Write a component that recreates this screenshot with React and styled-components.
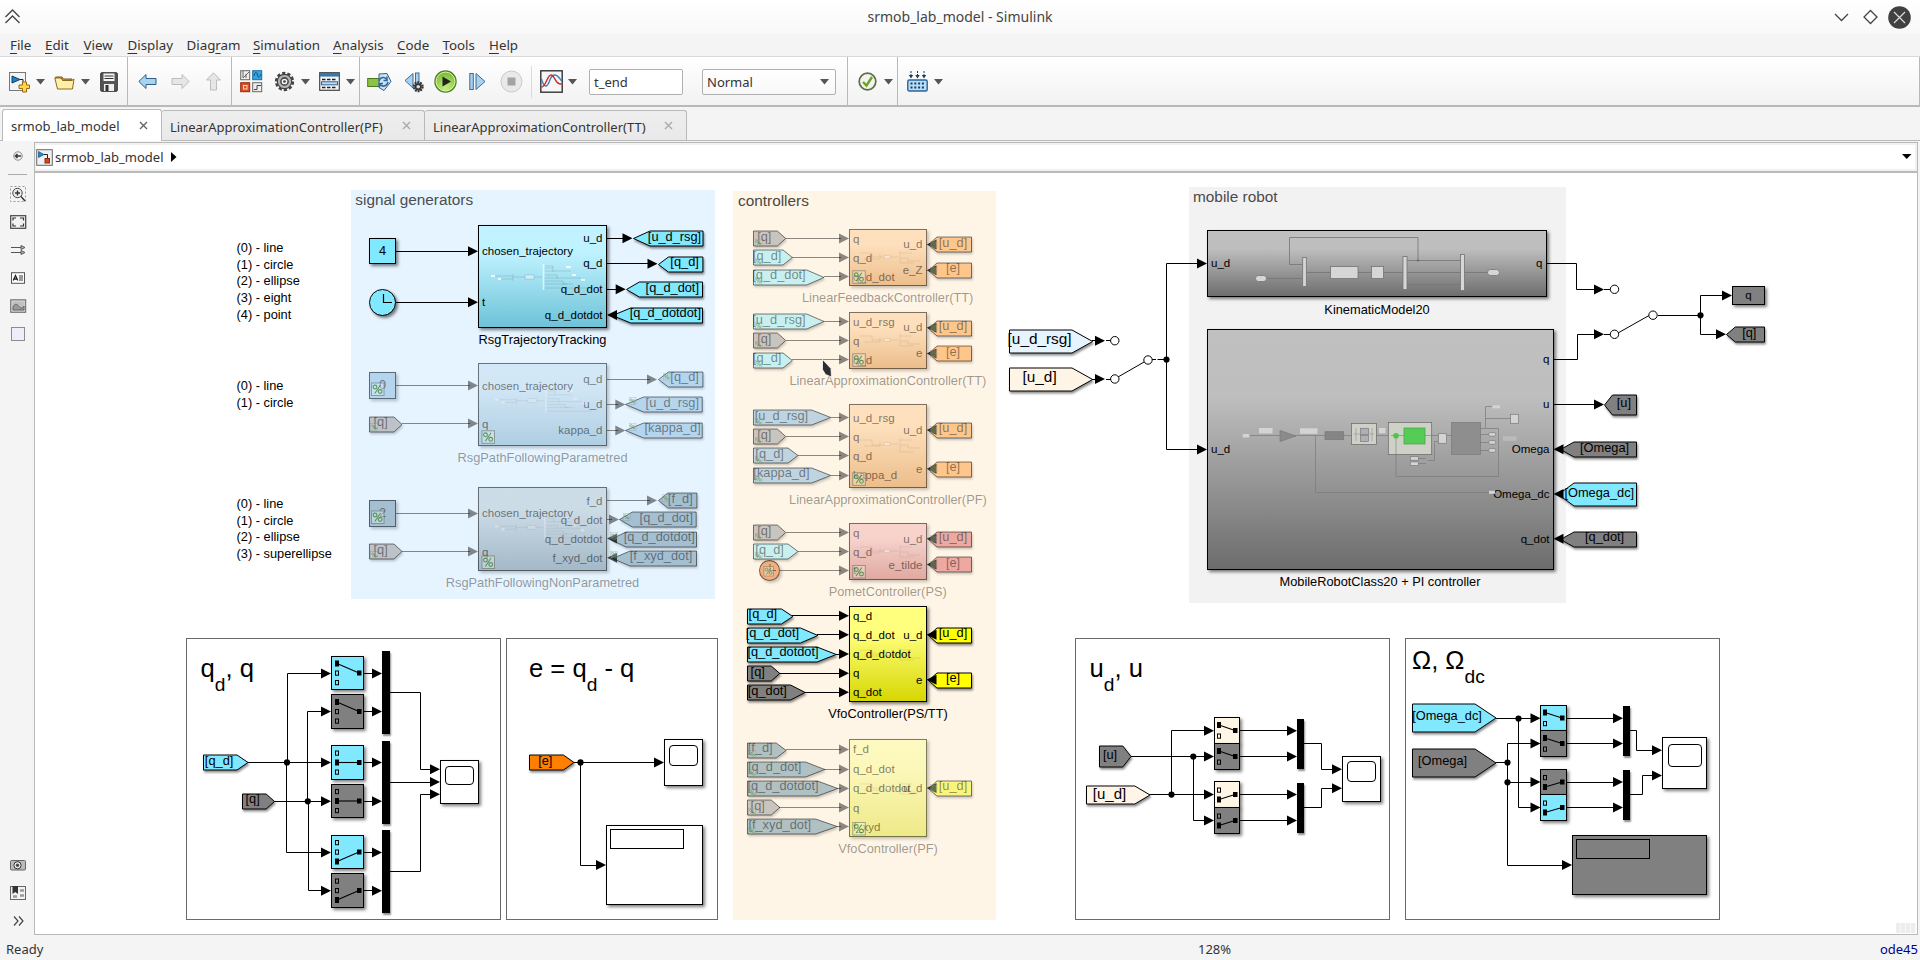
import React from "react";
import styled, { createGlobalStyle, css } from "styled-components";

const CYAN = "#80e8ff";
const GRAY = "#808080";
const CREAM = "#fff5e6";
const SKY = "#e6f4ff";
const INK = "#000";
const FADED = "rgba(0,0,0,0.45)";

const GlobalStyle = createGlobalStyle`
  html, body { margin: 0; padding: 0; overflow: hidden; background: #f4f4f4; }
  #root { height: 960px; }
  * { box-sizing: border-box; }
`;

/* ---------- window chrome ---------- */

const Window = styled.div`
  width: 1920px;
  height: 960px;
  display: flex;
  flex-direction: column;
  background: #f4f4f4;
  color: #333;
  font-family: "Noto Sans", "Open Sans", sans-serif;
  font-size: 13px;
  line-height: 18px;
  overflow: hidden;
`;

const TitleBar = styled.header`
  height: 34px;
  flex: none;
  display: grid;
  grid-template-columns: 120px 1fr 120px;
  align-items: center;
  background: linear-gradient(#ffffff, #f8f8f8);
  padding: 0 9px 0 4px;
`;

const Title = styled.div`
  text-align: center;
  font-size: 14px;
  color: #444;
  padding: 0 0 1px 5px;
`;

const WindowButtons = styled.div`
  display: flex;
  justify-content: flex-end;
  align-items: center;
  gap: 6px;
`;

const MenuBar = styled.nav`
  height: 23px;
  flex: none;
  display: flex;
  align-items: center;
  padding-left: 10px;
  border-bottom: 1px solid #d9d9d9;
  font-size: 13.33px;
`;

const MenuItem = styled.span`
  width: ${(p) => p.$w}px;
  white-space: nowrap;
  u { text-decoration-thickness: 1px; text-underline-offset: 3px; }
`;

const ToolBar = styled.div`
  height: 50px;
  flex: none;
  display: flex;
  background: linear-gradient(#ffffff, #f2f2f2);
  border-bottom: 2px solid #b9b9b9;
  border-right: 1px solid #b9b9b9;
`;

const ToolGroup = styled.div`
  width: ${(p) => p.$w}px;
  display: flex;
  align-items: center;
  padding-top: 1px;
  border-right: ${(p) => (p.$last ? "none" : "1px solid #b9b9b9")};
`;

const Tool = styled.div`
  flex: none;
  display: flex;
  align-items: center;
  justify-content: center;
  width: ${(p) => p.$w}px;
  margin-left: ${(p) => p.$gap}px;
  svg { flex: none; display: block; }
`;

const ToolDivider = styled.div`
  width: 1px;
  height: 32px;
  margin-left: 9px;
  background: #dadada;
`;

const Field = styled.div`
  flex: none;
  display: flex;
  align-items: center;
  justify-content: space-between;
  width: ${(p) => p.$w}px;
  height: 26px;
  margin-left: ${(p) => p.$gap}px;
  padding: 1px 6px 0 4px;
  background: ${(p) => (p.$flat ? "#fff" : "linear-gradient(#fff, #f8f8f8)")};
  border: 1px solid #b0b0b0;
  border-radius: 2px;
`;

const TabBar = styled.div`
  height: 34px;
  flex: none;
  display: flex;
  align-items: flex-end;
  padding-left: 2px;
  border-bottom: 1px solid #b9b9b9;
`;

const Tab = styled.div`
  display: flex;
  align-items: center;
  justify-content: space-between;
  width: ${(p) => p.$w}px;
  height: ${(p) => (p.$active ? 32 : 30)}px;
  margin-bottom: ${(p) => (p.$active ? -1 : 0)}px;
  padding: ${(p) => (p.$active ? "1px 13px 0 8px" : "2px 13px 0 8px")};
  background: ${(p) => (p.$active ? "#fff" : "linear-gradient(#eeeeee, #e9e9e9)")};
  border: 1px solid #b9b9b9;
  border-bottom: none;
  border-left-width: ${(p) => (p.$active ? 1 : 0)}px;
  border-radius: 3px 3px 0 0;
  white-space: nowrap;
  svg { margin-top: -2px; }
`;

const Body = styled.div`
  flex: 1;
  display: flex;
  min-height: 0;
  padding: 1px 2px 0 0;
`;

const Palette = styled.aside`
  width: 34px;
  flex: none;
  display: flex;
  flex-direction: column;
  align-items: center;
`;

const PaletteButton = styled.div`
  height: 28px;
  width: 24px;
  margin-left: 2px;
  display: flex;
  align-items: center;
  justify-content: center;
`;

const PaletteRule = styled.div`
  width: 19px;
  height: 1px;
  margin: 4px 0 5px;
  background: #aaa;
`;

const Spacer = styled.div`
  flex: 1;
`;

const Editor = styled.main`
  flex: 1;
  display: flex;
  flex-direction: column;
  border: 1px solid #b9b9b9;
`;

const BreadcrumbRow = styled.div`
  height: 30px;
  flex: none;
  display: flex;
  border-bottom: 2px solid #b9b9b9;
`;

const Breadcrumb = styled.div`
  flex: 1;
  display: flex;
  align-items: center;
  padding: 0 3px 0 0;
  background: #fff;
  border: 2px solid #f1f1f1;
  border-left-width: 1px;
`;

const Crumb = styled.span`
  padding: 0 7px 0 2px;
  flex: 1;
  display: flex;
  align-items: center;
  gap: 7px;
`;

const Canvas = styled.section`
  flex: 1;
  position: relative;
  overflow: hidden;
  background: #fff;
`;

const Sheet = styled.div`
  position: absolute;
  left: -35px;
  top: -173px;
  width: 1920px;
  height: 960px;
  font-family: "Liberation Sans", Arial, sans-serif;
`;

const StatusBar = styled.footer`
  height: 25px;
  flex: none;
  display: grid;
  grid-template-columns: 1192px 1fr auto;
  align-items: center;
  padding: 3px 2px 0 6px;
`;

const Solver = styled.span`
  color: #00008b;
`;

/* ---------- diagram nodes ---------- */

const placed = css`
  position: absolute;
  left: ${(p) => p.$x}px;
  top: ${(p) => p.$y}px;
`;

const sized = css`
  ${placed}
  width: ${(p) => p.$w}px;
  height: ${(p) => p.$h}px;
`;

const shift = { left: "0", center: "-50%", right: "-100%" };

const Label = styled.div`
  ${placed}
  transform: translate(${(p) => shift[p.$align || "left"]}, -50%);
  font-size: ${(p) => p.$size || 12.8}px;
  line-height: 1;
  white-space: pre;
  color: ${(p) => p.$color || INK};
`;

const Area = styled.div`
  ${sized}
  background: ${(p) => p.$fill};
`;

const Panel = styled.div`
  ${sized}
  background: #fff;
  border: 1px solid #6a6a6a;
`;

const Box = styled.div`
  ${sized}
  background: ${(p) => p.$fill};
  border: 1px solid ${(p) => (p.$faded ? "rgba(0,0,0,0.5)" : INK)};
  background-clip: ${(p) => (p.$faded ? "border-box" : "padding-box")};
  background-origin: border-box;
  box-shadow: 2px 2px 3px rgba(0, 0, 0, ${(p) => (p.$faded ? 0.22 : 0.5)});
  display: flex;
  align-items: center;
  justify-content: center;
  font-size: ${(p) => p.$size || 12.8}px;
  line-height: 1;
  color: ${(p) => (p.$faded ? FADED : INK)};
`;

const Disc = styled(Box)`
  border-radius: 50%;
`;

const MuxBar = styled.div`
  ${sized}
  background: #000;
  box-shadow: 1px 2px 2px rgba(0, 0, 0, 0.45);
`;

const Notes = styled.div`
  ${placed}
  font-size: 12.8px;
  line-height: 16.65px;
  color: #000;
  white-space: nowrap;
`;

const Formula = styled.div`
  ${placed}
  font-size: 25.6px;
  line-height: 30px;
  white-space: pre;
  color: #000;
  sub {
    font-size: 19.2px;
    line-height: 0;
    vertical-align: baseline;
    position: relative;
    top: 14px;
  }
`;

const Layer = styled.svg`
  position: absolute;
  left: 0;
  top: 0;
  width: 1920px;
  height: 960px;
  pointer-events: none;
`;

const TagShape = styled.svg`
  ${placed}
  overflow: visible;
  filter: drop-shadow(1.5px 2px 1.2px rgba(0, 0, 0, ${(p) => (p.$faded ? 0.2 : 0.45)}));
`;

const Grip = styled.div`
  position: absolute;
  right: 1px;
  bottom: 1px;
  width: 20px;
  height: 10px;
  background: repeating-linear-gradient(90deg, #ededed 0 4px, #f8f8f8 4px 5px);
`;

function CommentMark({ x, y, size = 13 }) {
  const small = size < 10;
  return (
    <g transform={`translate(${x} ${y}) scale(${size / 13})`}>
      <rect x="0.5" y="0.5" width="12.5" height="12.5" fill={small ? "rgba(240,245,235,0.2)" : "rgba(240,245,235,0.35)"} stroke="rgba(90,90,90,0.5)" strokeWidth={small ? 0.6 : 1} />
      <g fill="none" stroke="rgba(50,130,50,0.75)" strokeWidth="1.1">
        <circle cx="4" cy="4.5" r="1.9" />
        <circle cx="9.2" cy="9" r="1.9" />
        <path d="M9.5 2.5L3.8 11" />
      </g>
    </g>
  );
}

/* Goto/From tag: `tip` is the pointed end, `shoulder` where the taper starts, `end` the flat side. */
function Tag({ tip, shoulder, end, y, h = 16, fill, text, size, faded, tx }) {
  const left = Math.min(tip, end);
  const w = Math.abs(tip - end);
  const s = Math.abs(shoulder - left);
  const hh = h - 1;
  const pts =
    tip < end
      ? `0.5,${hh / 2} ${s},0 ${w - 0.5},0 ${w - 0.5},${hh} ${s},${hh}`
      : `0.5,0 ${s},0 ${w},${hh / 2} ${s},${hh} 0.5,${hh}`;
  return (
    <>
      <TagShape $x={left} $y={Math.round(y - 0.2 - h / 2) + 0.5} $faded={faded} width={w} height={hh}>
        <polygon points={pts} fill={fill} stroke={faded ? "rgba(0,0,0,0.5)" : INK} />
      </TagShape>
      <Label $x={tx || (shoulder + end) / 2 - 0.9} $y={y - 1.7} $align="center" $size={size} $color={faded ? FADED : INK}>
        {text}
      </Label>
    </>
  );
}

function Subsystem({ x, y, w, h, fill, faded, name, nx, ny, ins = [], outs = [] }) {
  const color = faded ? "rgba(0,0,0,0.5)" : INK;
  return (
    <>
      <Box $x={x} $y={y} $w={w} $h={h} $fill={fill} $faded={faded} />
      {ins.map(([t, py]) => (
        <Label key={t} $x={x + 4} $y={py + 0.5} $size={11.52} $color={color}>{t}</Label>
      ))}
      {outs.map(([t, py]) => (
        <Label key={t} $x={x + w - 4.5} $y={py + 0.5} $size={11.52} $align="right" $color={color}>{t}</Label>
      ))}
      <Label $x={nx} $y={ny} $align="center" $color={faded ? "rgba(0,0,0,0.4)" : INK}>{name}</Label>
    </>
  );
}

function Wire({ d, faded }) {
  return <path d={d} fill="none" stroke={faded ? FADED : INK} strokeWidth="1" />;
}

function Head({ x, y, back, faded }) {
  const b = back ? x + 10 : x - 10;
  const fill = faded ? (back ? "rgba(0,0,0,0.68)" : FADED) : INK;
  return <polygon points={`${x},${y} ${b},${y - 5} ${b},${y + 5}`} fill={fill} />;
}

function Switch({ x, y, h = 34, w = 33, fill, on, pads = 3 }) {
  const cy = h / 2;
  const ys = pads === 3 ? [cy - 9.5, cy, cy + 9.5] : [cy - 5 + (on ? 1 : 0) - 0.5, cy + 5 + (on ? 0 : 0.5)];
  const px = pads === 3 ? 6 : 5;
  return (
    <Box $x={x} $y={y} $w={w} $h={h} $fill={fill}>
      <svg width={w - 2} height={h - 2} viewBox={`1 1 ${w - 2} ${h - 2}`}>
        {ys.map((py, i) =>
          i === on ? (
            <rect key={i} x={px - 2} y={py - 3} width="4" height="6" />
          ) : (
            <rect key={i} x={px - 1.5} y={py - 2} width="3" height="4.2" fill="none" stroke="#000" />
          )
        )}
        <path d={`M${px} ${ys[on]}L${w - 5} ${cy}`} stroke="#000" strokeWidth="1.1" />
        <rect x={w - 7} y={cy - 2.5} width="4.5" height="5" />
      </svg>
    </Box>
  );
}

const Screen = styled.div`
  width: ${(p) => p.$w}px;
  height: ${(p) => p.$h}px;
  align-self: flex-start;
  margin: ${(p) => p.$top}px ${(p) => p.$right || 0}px 0 ${(p) => p.$left || 0}px;
  border: 1px solid #000;
  border-radius: ${(p) => p.$r || 0}px;
`;

const DisplayBox = styled(Box)`
  justify-content: flex-start;
`;

/* ---------- model data ---------- */

const steel = "linear-gradient(#c0c0c0 0%, #bebebe 28%, #6c6c6c 100%)";
const orange = "linear-gradient(#fee0be 0%, #fddfbc 28%, #ecbd8a 100%)";

const subsystems = [
  { x: 478, y: 225, w: 129, h: 103, fill: "linear-gradient(#c1f3ff 0%, #bff2ff 27%, #6cc2d7 100%)", name: "RsgTrajectoryTracking", nx: 542.5, ny: 339.6, ins: [["chosen_trajectory", 251], ["t", 302.5]], outs: [["u_d", 238.2], ["q_d", 263.7], ["q_d_dot", 289.5], ["q_d_dotdot", 315]] },
  { x: 478, y: 363, w: 129, h: 83, faded: 1, fill: "linear-gradient(#d3e8f6 0%, #d2e7f6 27%, #afcee2 100%)", name: "RsgPathFollowingParametred", nx: 542.5, ny: 458, ins: [["chosen_trajectory", 386], ["q", 424]], outs: [["q_d", 379], ["u_d", 404.6], ["kappa_d", 430]] },
  { x: 478, y: 487, w: 129, h: 84, faded: 1, fill: "linear-gradient(#cddde8 0%, #ccdce7 27%, #a3b8c7 100%)", name: "RsgPathFollowingNonParametred", nx: 542.5, ny: 583, ins: [["chosen_trajectory", 513], ["q", 552]], outs: [["f_d", 501], ["q_d_dot", 520], ["q_d_dotdot", 539], ["f_xyd_dot", 558]] },
  { x: 849, y: 229, w: 78, h: 57, faded: 1, fill: orange, name: "LinearFeedbackController(TT)", nx: 887.7, ny: 298, ins: [["q", 239], ["q_d", 258], ["q_d_dot", 277]], outs: [["u_d", 244.6], ["e_Z", 270.6]] },
  { x: 849, y: 312, w: 78, h: 57, faded: 1, fill: orange, name: "LinearApproximationController(TT)", nx: 887.9, ny: 381, ins: [["u_d_rsg", 322], ["q", 341], ["q_d", 360]], outs: [["u_d", 327.6], ["e", 353.6]] },
  { x: 849, y: 404, w: 78, h: 84, faded: 1, fill: orange, name: "LinearApproximationController(PF)", nx: 887.9, ny: 500, ins: [["u_d_rsg", 418], ["q", 437], ["q_d", 456], ["kappa_d", 475]], outs: [["u_d", 430], ["e", 469]] },
  { x: 849, y: 523, w: 78, h: 57, faded: 1, fill: "linear-gradient(#f6d3cc 0%, #f6d2cb 28%, #dfa89f 100%)", name: "PometController(PS)", nx: 887.7, ny: 591.5, ins: [["q", 533], ["q_d", 552], ["t", 570]], outs: [["u_d", 539], ["e_tilde", 565]] },
  { x: 849, y: 606, w: 78, h: 96, fill: "linear-gradient(#ffff80 0%, #ffff7c 28%, #d6d600 100%)", name: "VfoController(PS/TT)", nx: 888, ny: 713.6, ins: [["q_d", 616], ["q_d_dot", 635], ["q_d_dotdot", 654], ["q", 673], ["q_dot", 692]], outs: [["u_d", 635], ["e", 680]] },
  { x: 849, y: 739, w: 78, h: 98, faded: 1, fill: "linear-gradient(#fdf9c0 0%, #fcf8bc 28%, #eee987 100%)", name: "VfoController(PF)", nx: 888, ny: 848.6, ins: [["f_d", 749.5], ["q_d_dot", 769], ["q_d_dotdot", 788], ["q", 808], ["f_xyd", 827]], outs: [["u_d", 788]] },
  { x: 1207, y: 230, w: 340, h: 67, fill: steel, name: "KinematicModel20", nx: 1377, ny: 310, ins: [["u_d", 263.5]], outs: [["q", 263.5]] },
  { x: 1207, y: 329, w: 347, h: 241, fill: steel, name: "MobileRobotClass20 + PI controller", nx: 1380, ny: 582, ins: [["u_d", 449.5]], outs: [["q", 359.7], ["u", 404.5], ["Omega", 449.5], ["Omega_dc", 494.5], ["q_dot", 539.5]] },
];

const B = "#b4d5ed", D = "#a4bfd1", G = "#c9c4bd", GS = "#bcc2c8", T = "#c9f0ef", L = "#bfd4de", V = "#b1c0c2", O = "#fec68b", P = "#eda9a1", Y = "#faf47c";

const tags = [
  [632.5, 649.5, 703, 238.2, CYAN, "[u_d_rsg]", 0, { tx: 674.5 }],
  [657.6, 668, 703, 263.7, CYAN, "[q_d]"],
  [626, 639.3, 703, 289.3, CYAN, "[q_d_dot]", 0, { tx: 672.3 }],
  [612, 630.7, 703, 315, CYAN, "[q_d_dotdot]", 0, { tx: 665.4 }],
  [657.6, 668, 703, 379, B, "[q_d]", 1],
  [625.3, 644, 703, 404.3, B, "[u_d_rsg]", 1, { tx: 672.3 }],
  [625.3, 644, 703, 430, B, "[kappa_d]", 1],
  [657.6, 667.5, 697, 500.5, D, "[f_d]", 1, { tx: 680.3 }],
  [619.3, 632.7, 697, 519.5, D, "[q_d_dot]", 1, { tx: 666.3 }],
  [610, 626, 697, 538.7, D, "[q_d_dotdot]", 1, { tx: 659.3 }],
  [612, 630, 697, 557.9, D, "[f_xyd_dot]", 1, { tx: 661 }],
  [402, 394, 369, 423.7, GS, "[q]", 1],
  [402, 394, 369, 551.5, GS, "[q]", 1],
  [785.7, 777.3, 753, 238.3, G, "[q]", 1],
  [792.3, 783, 753, 257.3, T, "[q_d]", 1],
  [824, 806.7, 753, 276.7, T, "[q_d_dot]", 1],
  [824, 806.7, 753, 321.3, T, "[u_d_rsg]", 1],
  [785.7, 777.3, 753, 340.5, G, "[q]", 1],
  [792.3, 783, 753, 359.7, T, "[q_d]", 1],
  [830.7, 811.7, 753, 417.3, L, "[u_d_rsg]", 1],
  [785.7, 777.3, 753, 436.5, G, "[q]", 1],
  [798, 788, 753, 455.5, L, "[q_d]", 1],
  [830.7, 811.7, 753, 475, L, "[kappa_d]", 1],
  [785.7, 777.3, 753, 532.5, G, "[q]", 1],
  [798, 788, 753, 551.5, T, "[q_d]", 1],
  [792.3, 781, 746.5, 615.7, CYAN, "[q_d]"],
  [817.3, 800, 746.5, 634.7, CYAN, "[q_d_dot]"],
  [835.7, 816.5, 746.5, 654, CYAN, "[q_d_dotdot]", 0, { tx: 783 }],
  [779.3, 770.7, 746.5, 673.3, GRAY, "[q]"],
  [804.7, 790, 746.5, 692.3, GRAY, "[q_dot]"],
  [785.7, 775.7, 746.5, 749.7, V, "[f_d]", 1],
  [824.3, 805, 746.5, 769, V, "[q_d_dot]", 1, { tx: 774.7 }],
  [837.3, 817, 746.5, 788, V, "[q_d_dotdot]", 1, { tx: 783 }],
  [779.3, 770.7, 746.5, 807.3, G, "[q]", 1],
  [836.7, 815, 746.5, 826.3, V, "[f_xyd_dot]", 1, { tx: 779.7 }],
  ...[[244.3, "[u_d]", O, 1], [270, "[e]", O, 1], [327.7, "[u_d]", O, 1], [353.3, "[e]", O, 1], [430, "[u_d]", O, 1], [468.7, "[e]", O, 1], [538.7, "[u_d]", P, 1], [564.3, "[e]", P, 1], [634.7, "[u_d]", "#ffff00", 0], [679.7, "[e]", "#ffff00", 0], [788, "[u_d]", Y, 1]].map(
    ([y, t, f, d]) => [928, 937, 972, y, f, t, d, { tx: 953 }]
  ),
  [1092.6, 1072, 1009, 340.7, SKY, "[u_d_rsg]", 0, { h: 24, size: 15.36 }],
  [1092.6, 1072, 1009, 379, CREAM, "[u_d]", 0, { h: 24, size: 15.36 }],
  [1726, 1735.3, 1765, 334.3, GRAY, "[q]"],
  [1604, 1612.5, 1637, 404.5, GRAY, "[u]", 0, { h: 21 }],
  [1560, 1574, 1637, 449.3, GRAY, "[Omega]"],
  [1558, 1574, 1637, 494.3, CYAN, "[Omega_dc]", 0, { h: 24, tx: 1599.3 }],
  [1560, 1574, 1637, 539, GRAY, "[q_dot]"],
  [248, 237, 203, 762.5, CYAN, "[q_d]"],
  [274, 265.6, 241.5, 801, GRAY, "[q]"],
  [574, 563.4, 529, 762.5, "#ff8000", "[e]"],
  [1131, 1122.8, 1099, 756.5, GRAY, "[u]", 0, { h: 22 }],
  [1150, 1134.8, 1086, 794.5, CREAM, "[u_d]", 0, { h: 19, size: 15 }],
  [1496, 1475, 1412, 718, CYAN, "[Omega_dc]", 0, { h: 29, tx: 1447 }],
  [1496, 1475, 1412, 762.5, GRAY, "[Omega]", 0, { h: 29 }],
];

const faded = {
  wires: "M396 385.5H470M402 423.5H470M396 513.5H470M402 551.5H470M607 379.5H650M607 404.5H618M607 430.5H618M607 500.5H650M607 519.5H612M786 238.5H841M792 257.5H841M824 276.5H841M824 321.5H841M786 340.5H841M792 359.5H841M831 417.5H841M786 436.5H841M798 455.5H841M831 475.5H841M786 532.5H841M798 551.5H841M780 570.5H841M786 749.5H841M824 769.5H841M837 788.5H841M779 807.5H841M837 826.5H841",
  heads: [[478, 385.5], [478, 423.5], [478, 513.5], [478, 551.5], [657, 379.5], [625.3, 404.5], [625.3, 430.5], [657, 500.5], [619, 519.5], ...[238.5, 257.5, 276.5, 321.5, 340.5, 359.5, 417.5, 436.5, 455.5, 475.5, 532.5, 551.5, 570.5, 749.5, 769.5, 788.5, 807.5, 826.5].map((y) => [849, y])],
  back: [[607, 538.5], [607, 557.8], ...[244.5, 270.3, 327.7, 353.5, 430, 468.7, 538.7, 564.4, 788].map((y) => [926.5, y])],
};

const live = {
  wires:
    "M396 251.5H470M396 302.5H470M607 238.5H623M607 263.5H648M607 289.5H617M792 615.5H841M817 634.5H841M836 654.5H841M779 673.5H841M805 692.5H841" +
    "M1198 263.5H1166.5V449.5H1198M1092 340.5H1096M1106 340.5H1111M1092 379.5H1096M1106 379.5H1111M1118 377L1145 361.5M1152 359.5H1156M1157.5 359.5H1166" +
    "M1547 263.5H1576.5V289.5H1595M1604 289.5H1610M1554 359.5H1577.5V334.5H1595M1604 334.5H1610M1618 333L1649 315.5M1658 315.5H1700.5M1723 295.5H1700.5V334.5H1717M1554 404.5H1595" +
    "M248 762.5H323M287.5 762V673.5H323M286.5 762V852.5H323M274 801.5H323M307.5 801V711.5H323M308.5 801V890.5H323" +
    "M364 673.5H374M364 711.5H374M364 762.5H374M364 801.5H374M364 852.5H374M364 890.5H374M390 692.5H420.5V769.5H432M390 782.5H432M390 871.5H420.5V794.5H432" +
    "M574 762.5H655M580.5 762V865.5H597" +
    "M1131 756.5H1206M1193.5 756V820.5H1206M1150 794.5H1206M1171.5 794V730.5H1206M1240 730.5H1289M1240 756.5H1289M1240 794.5H1289M1240 820.5H1289M1304 743.5H1321.5V769.5H1333M1304 807.5H1321.5V788.5H1333" +
    "M1496 718.5H1532M1518.5 718V807.5H1532M1496 762.5H1507M1532 743.5H1507.5V865.5H1563M1507 782.5H1532M1567 718.5H1615M1567 743.5H1615M1567 782.5H1615M1567 807.5H1615M1630 730.5H1636.5V750.5H1653M1630 794.5H1642.5V775.5H1653",
  heads: [
    [478, 251.3], [478, 302.3], [632.5, 238.2], [657.5, 263.7], [625.7, 289.3],
    ...[615.7, 634.7, 654, 673.3, 692.3].map((y) => [849, y]),
    [1207, 263.5], [1207, 449.5], [1105, 340.7], [1105, 379], [1604, 289.4], [1604, 334.3], [1732, 295.4], [1726, 334.3], [1604, 404.5],
    ...[673.5, 711.5, 762.5, 801.3, 852.5, 890.7].flatMap((y) => [[331, y], [382, y]]),
    [440, 769.3], [440, 782], [440, 794.3], [664, 762.5], [606, 865],
    ...[730.7, 756.4, 794.6, 820.4].flatMap((y) => [[1214, y], [1297, y]]),
    [1342, 769.3], [1342, 788.3],
    ...[718.3, 743.4, 782, 807.4].flatMap((y) => [[1540.5, y], [1623, y]]),
    [1662, 750.2], [1662, 775.6], [1572, 865],
  ],
  back: [[607, 315], [926.5, 634.7], [926.5, 679.7], [1553.5, 449.2], [1553.5, 494], [1553.5, 538.8]],
  dots: [[1166.5, 359.6], [1700.5, 315.3], [287, 762.4], [307.8, 801.3], [580.5, 762.4], [1193.3, 756.5], [1171.5, 794.6], [1518.5, 718.5], [1507.5, 762.5], [1507.5, 782.3]],
  rings: [[1114.8, 340.7], [1114.8, 379], [1148, 360], [1614.5, 289.3], [1614.5, 334.3], [1653, 315.2]],
};

const commentMarks = [
  [371, 382.5], [481.5, 430.3], [371, 510.5], [481.5, 555.5],
  [852.3, 270.3], [852.3, 353.3], [852.3, 472.3], [852.3, 565], [852.3, 822], [763.5, 566, 10],
  ...[428, 556].map((y) => [370.5, y - 4.5, 7]),
  [663, 373, 7], [629, 397.5, 7], [629, 423.2, 7], [662, 494.5, 7], [623, 513.3, 7], [610.5, 532.5, 7], [610.5, 551, 7],
  ...[240, 259, 278, 323, 342, 361, 419, 438, 457, 476, 534, 553].map((y) => [755, y - 1, 7]),
  ...[751.5, 770.5, 790, 809, 828].map((y) => [748.5, y - 1, 7]),
  ...[244.5, 270.3, 327.7, 353.5, 430, 468.7, 538.7, 564.4, 788].map((y) => [930, y - 3.5, 7]),
];

function Thumb({ x, y, s = 1, color = "rgba(90,90,90,0.25)", glow = 1 }) {
  return (
    <g transform={`translate(${x} ${y}) scale(${s})`} fill="none" stroke={color} strokeWidth="0.8">
      <path d="M4 12H22M10 15H22M22 10V17M22 13H34M43 13H51M54 2H62V8M54 4H62M54 7H80M54 11H66V15M54 14H90M54 17H72V20H82M54 20H76M54 24H100" />
      <rect x="34" y="11" width="9" height="4" fill={`rgba(255,255,255,${0.45 * glow})`} />
      <path d="M52.5 0V26" stroke={`rgba(255,255,255,${0.6 * glow})`} strokeWidth="1.6" />
      <path d="M0 12H4M7 15H10M75 3H80M81 11H85M90 16H94" stroke={`rgba(255,255,255,${0.8 * glow})`} strokeWidth="2" />
    </g>
  );
}

function SmallThumb({ x, y, h = 12 }) {
  return (
    <g transform={`translate(${x} ${y})`} fill="none" stroke="rgba(90,80,60,0.13)" strokeWidth="0.8">
      <path d={`M0 2H12V${h / 2}H24M4 8H20V3M30 6H38M40 0V${h}M40 2H52M40 7H48V10H60M40 ${h}H54`} />
      <rect x="24" y="4.5" width="6" height="3" fill="rgba(255,255,255,0.35)" />
    </g>
  );
}

function KinematicPreview() {
  return (
    <g fill="#d6d6d6" stroke="#737373" strokeWidth="0.8">
      <path fill="none" d="M1266 278.5H1303M1303 264.5H1289.5V237.5H1418V260.5M1306 272.5H1488M1407 260.5H1461M1407 284.5H1461" />
      <rect x="1255.5" y="275.5" width="11" height="6" rx="3" />
      <rect x="1302.7" y="257.5" width="3.6" height="29" />
      <rect x="1330.5" y="266.5" width="27.5" height="12" />
      <rect x="1371.5" y="266.5" width="12" height="12" />
      <rect x="1403" y="256.5" width="4" height="33" />
      <rect x="1460.5" y="254.5" width="4" height="36" />
      <rect x="1487.5" y="269.5" width="12" height="6" rx="3" />
      <circle cx="1418" cy="260.5" r="0.8" fill="#555" />
    </g>
  );
}

function RobotPreview() {
  return (
    <g fill="#d4d4d4" stroke="#7a7a7a" strokeWidth="0.7">
      <path fill="none" d="M1249 435.5H1452M1315.5 436V492.5H1489M1396 436V476.5H1498.5V428.5H1480M1492 406.5H1485.5V428M1485 418.5H1511M1480 434.5H1489M1480 442.5H1489M1480 450.5H1489M1418 458.5H1426M1418 463.5H1426M1428 460.5H1434.5V441.5H1439" />
      <g stroke="none">
        <rect x="1242.5" y="434" width="7" height="3.4" rx="1.5" />
        <rect x="1259" y="428" width="13.5" height="5.5" />
        <rect x="1300" y="428.3" width="17.5" height="5.5" />
        <rect x="1379" y="428" width="6.5" height="5.3" />
        <rect x="1503" y="436.3" width="13.5" height="4.5" fill="#bbb" />
        <rect x="1492.5" y="405.3" width="7.5" height="3" />
        <rect x="1489" y="490.8" width="6" height="3" />
      </g>
      <path d="M1280 430.5V441.5L1296 436Z" fill="#8b8b8b" />
      <rect x="1325" y="431.7" width="18.7" height="8" fill="#858585" />
      <rect x="1351.5" y="423.5" width="25" height="21" fill="#cfd1c8" stroke="#666" />
      <path d="M1356 428V441M1372 428V441M1354 434H1374" fill="none" stroke="#999" />
      <rect x="1360.5" y="428.3" width="8" height="6" fill="#aeb0b8" />
      <rect x="1360.5" y="435.5" width="8" height="6" fill="#aeb0b8" />
      <rect x="1388.3" y="422.5" width="43.4" height="32" fill="#ced1c6" stroke="#666" />
      <path d="M1391 435.5H1404M1396 436V454M1425 435.5H1431" stroke="#888" />
      <circle cx="1396" cy="435.8" r="2.8" fill="#48c848" stroke="none" />
      <rect x="1404" y="428" width="21" height="16" fill="#55cc55" stroke="#4a9a4a" />
      <rect x="1438.6" y="433.7" width="7.8" height="9.6" />
      <rect x="1451.5" y="422.5" width="29" height="32" fill="#8e8e8e" />
      <rect x="1488.7" y="432.6" width="7" height="3.6" rx="1.5" />
      <rect x="1488.7" y="440.6" width="7" height="3.6" rx="1.5" />
      <rect x="1488.7" y="448.6" width="7" height="3.6" rx="1.5" />
      <rect x="1510.5" y="414.3" width="8" height="9" />
      <rect x="1410.3" y="456.7" width="8" height="3.5" />
      <rect x="1410.3" y="461.9" width="8" height="3.7" />
    </g>
  );
}

function Model() {
  return (
    <Sheet>
      <Area $x={351} $y={189.5} $w={364} $h={409} $fill={SKY} />
      <Area $x={733} $y={191} $w={262.5} $h={728.7} $fill={CREAM} />
      <Area $x={1188.7} $y={187} $w={377} $h={415.7} $fill="#f2f2f2" />
      <Label $x={355.3} $y={199.7} $size={15.36} $color="#4a4d50">signal generators</Label>
      <Label $x={738} $y={200.5} $size={15.36} $color="#4a4742">controllers</Label>
      <Label $x={1193} $y={196.8} $size={15.36} $color="#4a4a4a">mobile robot</Label>

      <Notes $x={236.5} $y={240}>(0) - line<br />(1) - circle<br />(2) - ellipse<br />(3) - eight<br />(4) - point</Notes>
      <Notes $x={236.5} $y={378}>(0) - line<br />(1) - circle</Notes>
      <Notes $x={236.5} $y={496}>(0) - line<br />(1) - circle<br />(2) - ellipse<br />(3) - superellipse</Notes>

      <Panel $x={186} $y={638} $w={315} $h={282} />
      <Panel $x={506} $y={638} $w={212} $h={282} />
      <Panel $x={1075} $y={638} $w={315} $h={282} />
      <Panel $x={1405} $y={638} $w={315} $h={282} />
      <Formula $x={200.5} $y={653}>q<sub>d</sub>, q</Formula>
      <Formula $x={529} $y={653}>e = q<sub>d</sub> - q</Formula>
      <Formula $x={1089.5} $y={653}>u<sub>d</sub>, u</Formula>
      <Formula $x={1412} $y={645}>Ω, Ω<sub>dc</sub></Formula>

      {subsystems.map((s) => <Subsystem key={s.name} {...s} />)}

      <Layer>
        <Thumb x={491} y={264} />
        <Thumb x={495} y={388} s={0.97} color="rgba(90,90,90,0.12)" glow={0.45} />
        <Thumb x={495} y={515} s={0.95} color="rgba(90,90,90,0.12)" glow={0.45} />
        <SmallThumb x={860} y={251} />
        <SmallThumb x={860} y={334} />
        <SmallThumb x={860} y={438} h={14} />
        <SmallThumb x={860} y={545} />
        <SmallThumb x={860} y={648} />
        <SmallThumb x={860} y={782} />
        <KinematicPreview />
        <RobotPreview />
      </Layer>

      <Box $x={369} $y={238} $w={27} $h={26} $fill={CYAN}>4</Box>
      <Box $x={369} $y={372} $w={27} $h={27} $fill={B} $faded>0</Box>
      <Box $x={369} $y={500} $w={27} $h={27} $fill={D} $faded>2</Box>
      <Disc $x={369} $y={289} $w={27} $h={27} $fill={CYAN}>
        <svg width="25" height="25"><path d="M13.5 4V12.5H22" fill="none" stroke="#000" strokeWidth="1.2" /></svg>
      </Disc>
      <Disc $x={759} $y={560} $w={21} $h={21} $fill="#f3b07f" $faded>
        <svg width="19" height="19"><path d="M10 3V9.5H16" fill="none" stroke="rgba(0,0,0,0.45)" /></svg>
      </Disc>
      <Box $x={1732} $y={286} $w={33} $h={19} $fill={GRAY} $size={11.52}>q</Box>

      {tags.map(([tip, shoulder, end, y, fill, text, dim, extra], i) => (
        <Tag key={i} tip={tip} shoulder={shoulder} end={end} y={y} fill={fill} text={text} faded={dim} {...extra} />
      ))}

      <Switch x={331} y={656} fill={CYAN} on={0} />
      <Switch x={331} y={694} h={35} fill={GRAY} on={0} />
      <Switch x={331} y={745} h={35} fill={CYAN} on={1} />
      <Switch x={331} y={784} fill={GRAY} on={1} />
      <Switch x={331} y={835} fill={CYAN} on={2} />
      <Switch x={331} y={873} h={35} fill={GRAY} on={2} />
      {[651, 740.5, 830].map((y) => <MuxBar key={y} $x={382} $y={y} $w={8} $h={83} />)}

      <Box $x={440} $y={759.5} $w={39} $h={44} $fill="#fff"><Screen $w={29} $h={19} $top={5} $r={4} /></Box>
      <Box $x={664} $y={739} $w={39} $h={47} $fill="#fff"><Screen $w={29} $h={21} $top={5} $r={4} /></Box>
      <DisplayBox $x={606} $y={825} $w={97} $h={80} $fill="#fff"><Screen $w={74} $h={20} $top={3} $left={3} /></DisplayBox>

      <Switch x={1214} y={717} w={26} h={27} pads={2} fill={CREAM} on={0} />
      <Switch x={1214} y={743} w={26} h={27} pads={2} fill={GRAY} on={0} />
      <Switch x={1214} y={781} w={26} h={27} pads={2} fill={CREAM} on={1} />
      <Switch x={1214} y={807} w={26} h={27} pads={2} fill={GRAY} on={1} />
      <MuxBar $x={1297} $y={718.5} $w={7} $h={50} />
      <MuxBar $x={1297} $y={782.5} $w={7} $h={50} />
      <Box $x={1342} $y={756} $w={39} $h={46} $fill="#fff"><Screen $w={29} $h={21} $top={4} $r={4} /></Box>

      <Switch x={1540} y={705} w={27} h={26} pads={2} fill={CYAN} on={0} />
      <Switch x={1540} y={730} w={27} h={27} pads={2} fill={GRAY} on={0} />
      <Switch x={1540} y={769} w={27} h={26} pads={2} fill={GRAY} on={1} />
      <Switch x={1540} y={794} w={27} h={27} pads={2} fill={CYAN} on={1} />
      <MuxBar $x={1623} $y={705.5} $w={7} $h={50} />
      <MuxBar $x={1623} $y={769.5} $w={7} $h={50} />
      <Box $x={1662} $y={736.5} $w={45} $h={52} $fill="#fff"><Screen $w={34} $h={23} $top={6} $r={4} /></Box>
      <DisplayBox $x={1572} $y={835} $w={135} $h={60} $fill={GRAY}><Screen $w={74} $h={20} $top={3} $left={3} /></DisplayBox>

      <Layer>
        <Wire d={faded.wires} faded />
        {faded.heads.map(([x, y]) => <Head key={`${x},${y}`} x={x} y={y} faded />)}
        {faded.back.map(([x, y]) => <Head key={`${x},${y}`} x={x} y={y} back faded />)}
        <Wire d={live.wires} />
        {live.heads.map(([x, y]) => <Head key={`${x},${y}`} x={x} y={y} />)}
        {live.back.map(([x, y]) => <Head key={`${x},${y}`} x={x} y={y} back />)}
        {live.dots.map(([x, y]) => <circle key={`${x},${y}`} cx={x} cy={y} r="3.1" />)}
        {live.rings.map(([x, y]) => <circle key={`${x},${y}`} cx={x} cy={y} r="4.2" fill="#fff" stroke="#000" />)}
        {commentMarks.map(([x, y, s]) => <CommentMark key={`${x},${y}`} x={x} y={y} size={s} />)}
        <path d="M822.5 359.5L831 368.5L831.5 377L825.5 374.5L822.5 369.5Z" fill="#2c2f31" stroke="#fff" strokeWidth="0.8" />
      </Layer>
    </Sheet>
  );
}

/* ---------- icons ---------- */

const Caret = () => <svg width="9" height="6"><path d="M0 0H9L4.5 5.5Z" fill="#555" /></svg>;

const NewIcon = () => (
  <svg width="22" height="22" viewBox="0 0 22 22">
    <rect x="1.5" y="1.5" width="16" height="18" fill="#f2f4f6" stroke="#777" />
    <path d="M4 5L12 8.5L4 12Z" fill="#1b83c4" stroke="#0d3f66" />
    <path d="M12 8.5H15V12" fill="none" stroke="#222" />
    <path d="M14.5 11H18.5V14H21.5V17.5H18.5V21H14.5V17.5H11V14H14.5Z" fill="#ffd84a" stroke="#9a6a10" />
  </svg>
);
const OpenIcon = () => (
  <svg width="21" height="18" viewBox="0 0 21 18">
    <path d="M1.5 4L8 4L9.5 6H18V15.5H4Z" fill="#c69a3c" stroke="#7b5a18" />
    <path d="M0.8 5H7L8.5 7.5H18L20 6L18.5 16H3.5Z" fill="#ffefa8" stroke="#8b6a22" />
  </svg>
);
const SaveIcon = () => (
  <svg width="18" height="20" viewBox="0 0 18 20">
    <rect x="0.7" y="0.7" width="16.6" height="18.6" rx="1" fill="#555" stroke="#333" />
    <rect x="3.5" y="1.5" width="11" height="7.5" fill="#f5f5f5" />
    <path d="M4.5 4H13.5M4.5 6.5H13.5" stroke="#333" />
    <rect x="4" y="12" width="10" height="7" fill="#eee" />
    <rect x="5.5" y="13" width="3" height="6" fill="#333" />
  </svg>
);
const ArrowIcon = ({ turn = 0, fill, stroke }) => (
  <svg width="19" height="19" viewBox="0 0 19 19">
    <path transform={`rotate(${turn} 9.5 9.5)`} d="M0.8 9.5L8 2.5V6.5H18V12.5H8V16.5Z" fill={fill} stroke={stroke} strokeLinejoin="round" />
  </svg>
);
const LibraryIcon = () => (
  <svg width="23" height="23" viewBox="0 0 23 23">
    <rect x="0.7" y="0.7" width="9" height="9" fill="#eee" stroke="#666" /><path d="M3 1V8M3 8L9 2M6 8V4" stroke="#666" fill="none" />
    <rect x="12.7" y="0.7" width="9" height="9" fill="#39a3df" stroke="#1a6ea5" /><path d="M14 6C15 1 17 2 17.5 5S20 8 21 4" stroke="#0f4f7d" fill="none" />
    <rect x="0.7" y="12.7" width="9" height="9" fill="#d7502a" stroke="#8f2c10" /><rect x="3.5" y="15.5" width="3.5" height="3.5" fill="none" stroke="#ffd9a0" />
    <rect x="12.7" y="12.7" width="9" height="9" fill="#eee" stroke="#666" /><path d="M14 19.5H17V15.5H21" stroke="#444" fill="none" />
  </svg>
);
const GearIcon = ({ size = 21 }) => (
  <svg width={size} height={size} viewBox="0 0 22 22">
    <circle cx="11" cy="11" r="8.6" fill="none" stroke="#444" strokeWidth="3" strokeDasharray="3.38 2.02" />
    <circle cx="11" cy="11" r="7.5" fill="#b5b5b5" stroke="#444" strokeWidth="1.2" />
    <circle cx="11" cy="11" r="3.8" fill="#f4f4f4" stroke="#444" strokeWidth="1.6" />
    <circle cx="11" cy="11" r="1.4" fill="#444" />
  </svg>
);
const TableIcon = () => (
  <svg width="21" height="19" viewBox="0 0 21 19">
    <rect x="0.7" y="0.7" width="19.6" height="17.6" fill="#f6f6f6" stroke="#444" strokeWidth="1.2" />
    <rect x="1" y="1" width="19" height="3.6" fill="#3777ab" />
    <path d="M3 7.5H18M3 15.5H18" stroke="#222" strokeDasharray="3.5 1.5" strokeWidth="1.4" />
    <rect x="2.5" y="9.8" width="16" height="3" fill="#bcdcf5" stroke="#2a659a" />
  </svg>
);
const UpdateIcon = () => (
  <svg width="25" height="20" viewBox="0 0 25 20">
    <rect x="0.7" y="6.5" width="12" height="8" fill="#8cc344" stroke="#4b7a1b" />
    <path d="M12 5V2L20 1.5L24 9.5L17 18.5L12 15.5Z" fill="#cfe3f5" stroke="#345f8a" />
    <path d="M12 9C13 5 18 4 20 8M20 4.5V8.5H16.5M21 10C20 14.5 15 15.5 12.5 12M12.5 15.5V11.5H16" fill="none" stroke="#2d6aa5" strokeWidth="1.5" />
  </svg>
);
const StepBackIcon = () => (
  <svg width="20" height="22" viewBox="0 0 20 22">
    <path d="M9 2.5V17L1 9.5Z" fill="#a9d0ef" stroke="#3b6d98" />
    <rect x="11.5" y="2" width="3.5" height="11" fill="#a9d0ef" stroke="#3b6d98" />
    <g transform="translate(8.5 10) scale(0.52)">
      <circle cx="11" cy="11" r="8.6" fill="#999" stroke="#333" strokeWidth="4" strokeDasharray="3.38 2.02" />
      <circle cx="11" cy="11" r="5" fill="#ddd" stroke="#333" strokeWidth="3" />
    </g>
  </svg>
);
const PlayIcon = () => (
  <svg width="23" height="23" viewBox="0 0 23 23">
    <defs><radialGradient id="run" cx="0.5" cy="0.8" r="0.8"><stop offset="0" stopColor="#c4f07a" /><stop offset="1" stopColor="#76b52e" /></radialGradient></defs>
    <circle cx="11.5" cy="11.5" r="10.6" fill="url(#run)" stroke="#4f7f22" strokeWidth="1.2" />
    <circle cx="11.5" cy="11.5" r="9.4" fill="none" stroke="#e4f7c4" strokeOpacity="0.8" />
    <path d="M8.5 6.5L17 11.5L8.5 16.5Z" fill="#222" />
  </svg>
);
const StepIcon = () => (
  <svg width="17" height="19" viewBox="0 0 17 19">
    <rect x="0.8" y="1.5" width="3.5" height="16" fill="#a9d0ef" stroke="#3b6d98" />
    <path d="M7 1.5L16 9.5L7 17.5Z" fill="#a9d0ef" stroke="#3b6d98" />
  </svg>
);
const StopIcon = () => (
  <svg width="23" height="23" viewBox="0 0 23 23">
    <circle cx="11.5" cy="11.5" r="10.5" fill="#e9e9e9" stroke="#c9c9c9" />
    <rect x="7.5" y="7.5" width="8" height="8" fill="#a3a3a3" />
  </svg>
);
const ScopeIcon = () => (
  <svg width="23" height="23" viewBox="0 0 23 23">
    <rect x="0.8" y="0.8" width="21.4" height="21.4" fill="#f7f7f7" stroke="#333" strokeWidth="1.4" />
    <path d="M1.5 9C4 18 7 18 9.5 11S16 2 21.5 11" fill="none" stroke="#3c7fc0" strokeWidth="1.4" />
    <path d="M1.5 17C6 17 7 5 11 5S15 15 21.5 14" fill="none" stroke="#c62c2c" strokeWidth="1.4" />
  </svg>
);
const CheckIcon = () => (
  <svg width="19" height="19" viewBox="0 0 19 19">
    <circle cx="9.5" cy="9.5" r="8.3" fill="#f2f4ee" stroke="#5c6e45" strokeWidth="1.7" />
    <path d="M5 10L8.5 13.5L14 5" fill="none" stroke="#6da12d" strokeWidth="2.4" />
  </svg>
);
const BuildIcon = () => (
  <svg width="21" height="21" viewBox="0 0 21 21">
    <path d="M4 0V5M10.5 0V5M17 0V5" stroke="#163f66" strokeDasharray="2 1" />
    <path d="M1.8 4H6.2L4 7.5ZM8.3 4H12.7L10.5 7.5ZM14.8 4H19.2L17 7.5Z" fill="#163f66" />
    <rect x="0.8" y="9" width="19.4" height="11" rx="1.5" fill="#b9dcf7" stroke="#2a659a" strokeWidth="1.4" />
    <path d="M3.5 12.5H18M3.5 16.5H18" stroke="#163f66" strokeWidth="2" strokeDasharray="2 1.8" />
  </svg>
);
const ModelIcon = () => (
  <svg width="17" height="17" viewBox="0 0 17 17">
    <rect x="0.7" y="0.7" width="15.6" height="15.6" fill="#eef1f3" stroke="#666" />
    <path d="M2.5 2.5L8 5.5L2.5 8.5Z" fill="#2289c9" stroke="#14507a" strokeWidth="0.7" />
    <path d="M8 5.5H11.5V9" fill="none" stroke="#222" />
    <rect x="9" y="9.5" width="4.5" height="4.5" fill="#d2481e" stroke="#8f2c10" />
  </svg>
);
const CloseMark = ({ color }) => <svg width="9" height="9"><path d="M1 1L8 8M8 1L1 8" stroke={color} strokeWidth="1.4" /></svg>;

const PaletteIcon = ({ kind }) => (
  <svg width="18" height="16" viewBox="0 0 18 16" fill="none" stroke="#555">
    {kind === "back" && <><circle cx="9" cy="8" r="4.2" stroke="#888" /><path d="M6.5 8H12M8.5 6L6.5 8L8.5 10" strokeWidth="1.5" stroke="#333" /></>}
    {kind === "zoom" && <><rect x="1.5" y="0.5" width="15" height="15" strokeDasharray="2 2" stroke="#999" /><circle cx="8.5" cy="7" r="4.7" fill="#eee" stroke="#444" /><path d="M6 7H11M8.5 4.5V9.5M12 10.5L16 15" stroke="#333" strokeWidth="1.4" /></>}
    {kind === "fit" && <><rect x="1.7" y="1.7" width="15" height="12.6" fill="#f2f2f2" stroke="#444" strokeWidth="1.2" /><path d="M4 6.5V4H7M11 4H14.5V6.5M4 9.5V12H7M14.5 9.5V12H11" stroke="#333" strokeWidth="1.2" /></>}
    {kind === "lines" && <><path d="M2 5.5H13M2 10.5H13" /><path d="M12 3.5L16 5.5L12 7.5ZM12 8.5L16 10.5L12 12.5Z" fill="#bbb" /></>}
    {kind === "text" && <><rect x="2.5" y="2.7" width="13" height="10.6" fill="#fff" /><path d="M4.2 10.5L6.5 5.5L8.8 10.5M5 9H8" stroke="#222" strokeWidth="1.3" /><path d="M10 6H14M10 8H14M10 10H14" stroke="#333" /></>}
    {kind === "image" && <><rect x="1.7" y="1.8" width="15" height="12.5" fill="#cfcfcf" stroke="#6a6a6a" /><rect x="3.7" y="3.8" width="11" height="8.5" fill="#c0c0c0" stroke="none" /><path d="M4 9C6 5 8 6 10 8.5S14 10 15 8V12H4Z" fill="#9a9a9a" stroke="#666" /></>}
    {kind === "area" && <rect x="2.5" y="1.5" width="13" height="13" fill="#eeeefa" stroke="#8c8c8c" />}
    {kind === "camera" && <><rect x="1.5" y="3.5" width="15" height="9.5" rx="1" fill="#bbb" stroke="#666" /><circle cx="8.5" cy="8.3" r="3.6" fill="#eee" stroke="#333" /><circle cx="8.5" cy="8.3" r="1.3" fill="#333" /></>}
    {kind === "book" && <><rect x="1.5" y="1.5" width="15" height="13" fill="#f2f2f2" stroke="#666" /><path d="M3.5 1H9V9L6.3 7L3.5 9Z" fill="#333" stroke="none" /><path d="M11 5.5H15M11 10.5H15M4 11.5H8" stroke="#999" strokeWidth="2.5" /></>}
    {kind === "more" && <path d="M5 3.5L9 8L5 12.5M10 3.5L14 8L10 12.5" stroke="#444" strokeWidth="1.2" />}
  </svg>
);

const menus = [["", "F", "ile", 35], ["", "E", "dit", 38.5], ["", "V", "iew", 44], ["", "D", "isplay", 59], ["Diag", "r", "am", 66.5], ["", "S", "imulation", 80], ["", "A", "nalysis", 64], ["", "C", "ode", 45.5], ["", "T", "ools", 46.5], ["", "H", "elp", 40]];

export default function App() {
  return (
    <>
      <GlobalStyle />
      <Window>
        <TitleBar>
          <svg width="18" height="18" viewBox="0 0 18 18"><path d="M1.5 9L8.5 2L15.5 9M1.5 15L8.5 8L15.5 15" fill="none" stroke="#444" strokeWidth="1.3" /></svg>
          <Title>srmob_lab_model - Simulink</Title>
          <WindowButtons>
            <svg width="22" height="22"><path d="M4 8L10.5 14.5L17 8" fill="none" stroke="#444" strokeWidth="1.3" /></svg>
            <svg width="23" height="22"><path d="M11.5 4.5L18 11L11.5 17.5L5 11Z" fill="none" stroke="#444" strokeWidth="1.3" /></svg>
            <svg width="23" height="23"><circle cx="11.5" cy="11.5" r="11.3" fill="#414141" /><path d="M6 6L17 17M17 6L6 17" stroke="#ddd" strokeWidth="1.2" /></svg>
          </WindowButtons>
        </TitleBar>
        <MenuBar>
          {menus.map(([a, u, b, w]) => <MenuItem key={a + u + b} $w={w}>{a}<u>{u}</u>{b}</MenuItem>)}
        </MenuBar>
        <ToolBar>
          <ToolGroup $w={128}>
            <Tool $gap={8} $w={22}><NewIcon /></Tool>
            <Tool $gap={6} $w={9}><Caret /></Tool>
            <Tool $gap={9} $w={20}><OpenIcon /></Tool>
            <Tool $gap={7} $w={9}><Caret /></Tool>
            <Tool $gap={10} $w={18}><SaveIcon /></Tool>
          </ToolGroup>
          <ToolGroup $w={104}>
            <Tool $gap={10} $w={18}><ArrowIcon fill="#a9d3f2" stroke="#2f5f88" /></Tool>
            <Tool $gap={15} $w={18}><ArrowIcon turn={180} fill="#e6e6e6" stroke="#bdbdbd" /></Tool>
            <Tool $gap={16} $w={16}><ArrowIcon turn={90} fill="#e6e6e6" stroke="#bdbdbd" /></Tool>
          </ToolGroup>
          <ToolGroup $w={128}>
            <Tool $gap={8} $w={22}><LibraryIcon /></Tool>
            <Tool $gap={12} $w={20}><GearIcon /></Tool>
            <Tool $gap={7} $w={9}><Caret /></Tool>
            <Tool $gap={9} $w={20}><TableIcon /></Tool>
            <Tool $gap={7} $w={9}><Caret /></Tool>
          </ToolGroup>
          <ToolGroup $w={488}>
            <Tool $gap={7} $w={24}><UpdateIcon /></Tool>
            <Tool $gap={13} $w={19}><StepBackIcon /></Tool>
            <Tool $gap={11} $w={22}><PlayIcon /></Tool>
            <Tool $gap={13} $w={17}><StepIcon /></Tool>
            <Tool $gap={14} $w={22}><StopIcon /></Tool>
            <ToolDivider />
            <Tool $gap={8} $w={22}><ScopeIcon /></Tool>
            <Tool $gap={6} $w={9}><Caret /></Tool>
            <Field $gap={12} $w={94} $flat>t_end</Field>
            <Field $gap={19} $w={134}>Normal<Caret /></Field>
          </ToolGroup>
          <ToolGroup $w={50}>
            <Tool $gap={10} $w={18}><CheckIcon /></Tool>
            <Tool $gap={8} $w={9}><Caret /></Tool>
          </ToolGroup>
          <ToolGroup $w={200} $last>
            <Tool $gap={9} $w={20}><BuildIcon /></Tool>
            <Tool $gap={7} $w={9}><Caret /></Tool>
          </ToolGroup>
        </ToolBar>
        <TabBar>
          <Tab $w={160} $active>srmob_lab_model<CloseMark color="#666" /></Tab>
          <Tab $w={263}>LinearApproximationController(PF)<CloseMark color="#aaa" /></Tab>
          <Tab $w={262}>LinearApproximationController(TT)<CloseMark color="#aaa" /></Tab>
        </TabBar>
        <Body>
          <Palette>
            <PaletteButton><PaletteIcon kind="back" /></PaletteButton>
            <PaletteRule />
            {["zoom", "fit", "lines", "text", "image", "area"].map((k) => <PaletteButton key={k}><PaletteIcon kind={k} /></PaletteButton>)}
            <Spacer />
            {["camera", "book", "more"].map((k) => <PaletteButton key={k}><PaletteIcon kind={k} /></PaletteButton>)}
          </Palette>
          <Editor>
            <BreadcrumbRow>
              <Breadcrumb>
                <ModelIcon />
                <Crumb>srmob_lab_model<svg width="6" height="10"><path d="M0 0L5.5 5L0 10Z" fill="#000" /></svg></Crumb>
                <svg width="10" height="6"><path d="M0 0H9.5L4.7 5Z" fill="#000" /></svg>
              </Breadcrumb>
            </BreadcrumbRow>
            <Canvas>
              <Model />
              <Grip />
            </Canvas>
          </Editor>
        </Body>
        <StatusBar>
          <span>Ready</span>
          <span>128%</span>
          <Solver>ode45</Solver>
        </StatusBar>
      </Window>
    </>
  );
}
